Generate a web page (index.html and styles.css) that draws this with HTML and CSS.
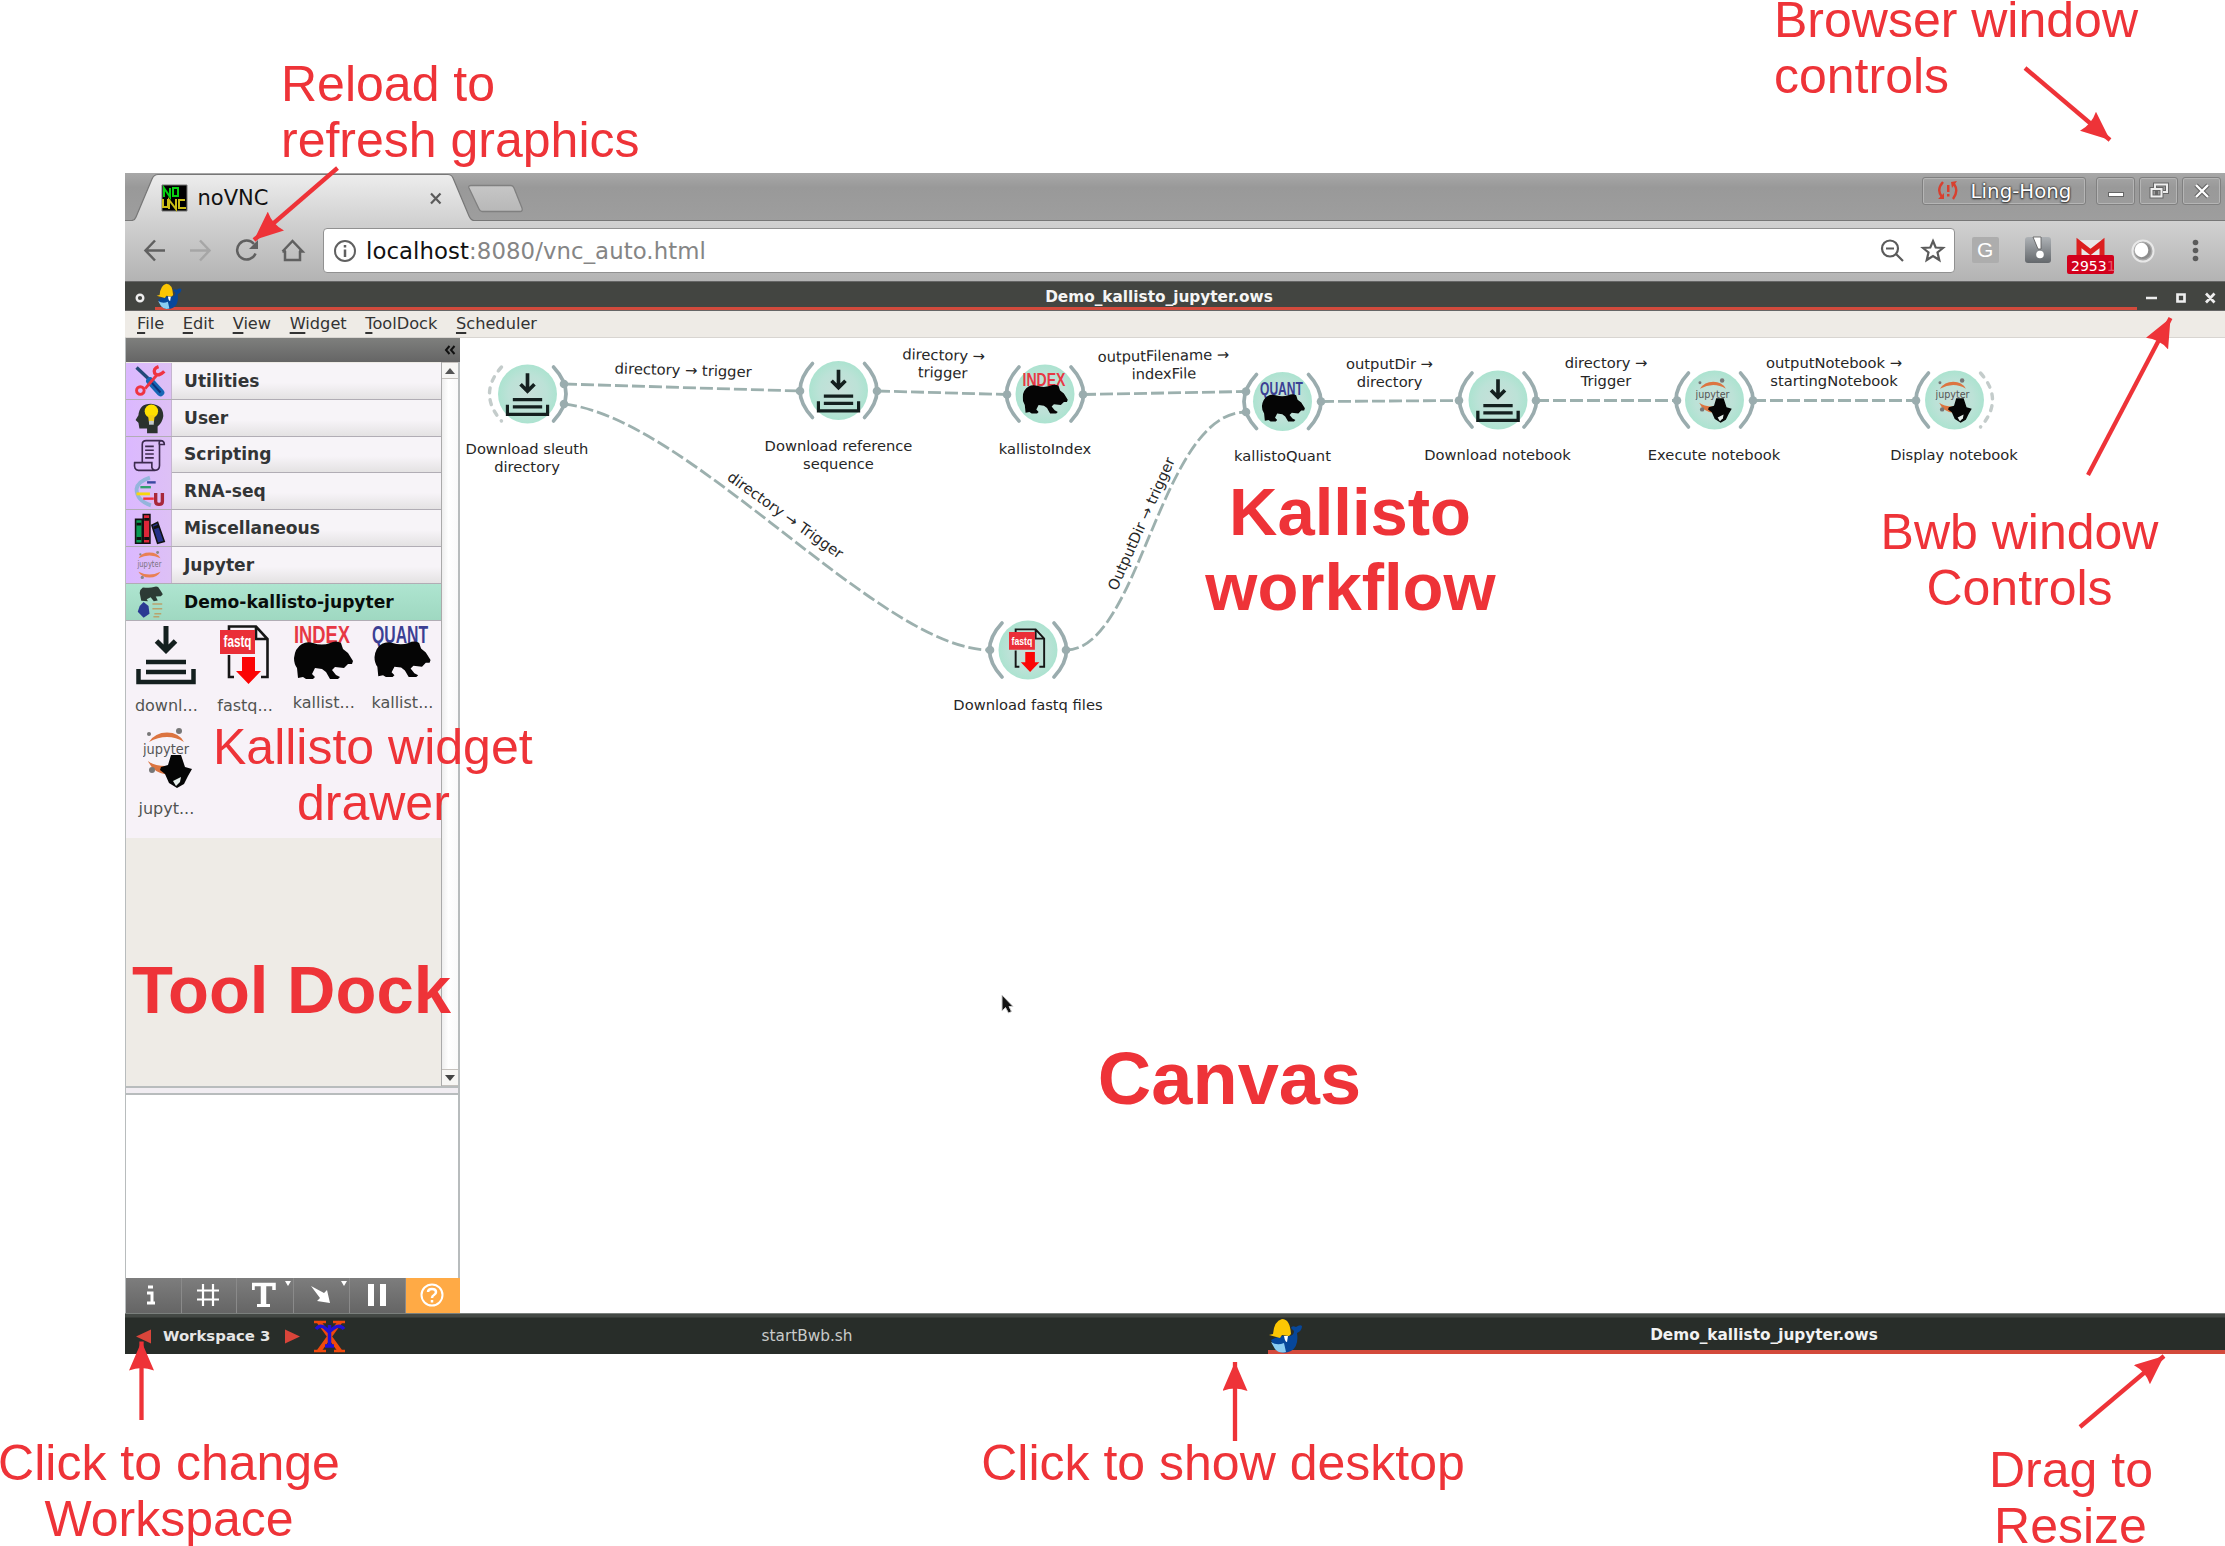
FILE: index.html
```html
<!DOCTYPE html>
<html lang="en">
<head>
<meta charset="utf-8">
<title>noVNC</title>
<link rel="stylesheet" href="styles.css">
</head>
<body>
<svg class="defs" width="0" height="0">
  <defs>
    <radialGradient id="mint"><stop offset="0" stop-color="#c8dfd9"/><stop offset=".65" stop-color="#bce2d7"/><stop offset="1" stop-color="#ace3d0"/></radialGradient>
    <symbol id="download" viewBox="0 0 60 60">
      <path d="M30 1V24M20.500 16L30 25.500L39.500 16" fill="none" stroke="#14201f" stroke-width="5"/>
      <path d="M10 37H50M10 47H50M2.500 44V57H57.500V44" fill="none" stroke="#14201f" stroke-width="4.500"/>
    </symbol>
    <symbol id="bear" viewBox="0 0 60 40">
      <path d="M0 17Q1 7 8 3Q13 0 19 2Q28 5 36 2Q42-1 47 2L49 8L54 12L59 20L58 23L54 23L50 27L41 26L38 29L42 34L46 36L44 38L36 38L32 31L28 28L21 27L18 33L21 36L19 38L12 38L9 36L4 37L3 27Q0 23 0 17Z" fill="#050505"/>
    </symbol>
    <symbol id="index" viewBox="0 0 60 56">
      <text x="0" y="18" class="caps" fill="#e73844" textLength="56" lengthAdjust="spacingAndGlyphs">INDEX</text>
      <use href="#bear" x="0" y="16" width="60" height="40"/>
    </symbol>
    <symbol id="quant" viewBox="0 0 60 56">
      <text x="0" y="18" class="caps" fill="#3b3f94" textLength="56" lengthAdjust="spacingAndGlyphs">QUANT</text>
      <use href="#bear" x="2" y="16" width="58" height="38"/>
    </symbol>
    <symbol id="fastq" viewBox="0 0 50 60">
      <path d="M9 28V1.500H36L47.500 14V52H41M9 30V52H14M36 1.500V14H47.500" fill="none" stroke="#161616" stroke-width="2.600"/>
      <path d="M0 5H35V29H0Z" fill="#ea2f38"/>
      <path d="M22 32H35V46H41L28.500 59L16 46H22Z" fill="#fb0505"/>
      <text x="3.500" y="22" class="fq" textLength="28" lengthAdjust="spacingAndGlyphs">fastq</text>
    </symbol>
    <symbol id="jup" viewBox="0 0 50 60">
      <path d="M6 14Q12 4.500 24 4.500T41 14Q33 9 24 9T6 14Z" fill="#dc7440"/>
      <path d="M5 33Q11 38 23 38L25 47Q10 45 5 33Z" fill="#dc7440"/>
      <circle cx="6" cy="6" r="2" fill="#777"/><circle cx="36" cy="3" r="3" fill="#777"/><circle cx="9" cy="42" r="3" fill="#777"/>
      <text x="0" y="26" class="jt" textLength="46" lengthAdjust="spacingAndGlyphs">jupyter</text>
      <path d="M28 27L38 27L42 39L49 41L45 48L41 56L34 60L26 55L22 46L17 42L18 39L25 37Z" fill="#050505"/>
      <path d="M30 53L38 49L37 54L33 58Z" fill="#e6efec"/>
    </symbol>
    <symbol id="whale" viewBox="0 0 35 36">
      <path d="M3 22Q14 16 22 18Q26 17 26 13L23 10Q24 7 28 9Q32 6 34 8Q34 13 29 15Q31 28 23 33Q15 37 8 32Z" fill="#07479a"/>
      <path d="M3 24Q9 28 16 25L18 34Q11 36 7 31Z" fill="#8bcdf2"/>
      <path d="M16 18L20 18L19 24Q17 24 16 18Z" fill="#fff"/>
      <path d="M5 16Q6 3 14 1Q22 1 23 16L21 18L14 17L12 20L1 17Z" fill="#fcc603"/>
    </symbol>
    <marker id="head" viewBox="0 0 29 25" refX="29" refY="12.500" markerWidth="29" markerHeight="25" markerUnits="userSpaceOnUse" orient="auto"><path d="M29 12.500L0 25Q5 12.500 0 0Z" fill="#ee3338"/></marker>
  </defs>
</svg>

<div class="page">
  <main class="window">
    <header class="tabstrip">
      <svg class="tabshape" width="420" height="48" viewBox="125 173 420 48">
        <defs><linearGradient id="tg" x1="0" y1="0" x2="0" y2="1"><stop offset="0" stop-color="#ededed"/><stop offset="1" stop-color="#d1d1d1"/></linearGradient>
        <linearGradient id="ng" x1="0" y1="0" x2="0" y2="1"><stop offset="0" stop-color="#c6c6c6"/><stop offset="1" stop-color="#b8b8b8"/></linearGradient></defs>
        <path d="M125 220.500H132Q135 220 136 217L152 179Q154 174.500 158 174.500H448Q451.500 174.500 453 178L469 216Q471 220.500 474 220.500H545V222H125Z" fill="url(#tg)"/>
        <path d="M125 220.500H132Q135 220 136 217L152 179Q154 174.500 158 174.500H448Q451.500 174.500 453 178L469 216Q471 220.500 474 220.500H545" fill="none" stroke="#777" stroke-width="1.200"/>
        <path d="M471 185.500H511Q513 185.500 514 188L522 208Q523 211.500 520 211.500H482Q480 211.500 479 209L469 188Q468 185.500 471 185.500Z" fill="url(#ng)" stroke="#808080" stroke-width="1.300"/>
        <path d="M162 185H187V211H162Z" fill="#000" stroke="#777"/>
        <path d="M164 197V188L170 197V188M173 188H178V196H173Z" fill="none" stroke="#08d112" stroke-width="2"/>
        <path d="M163 199V207L168 207V199M169 209V200L176 209V199M185 200H179V208H186" fill="none" stroke="#cbbd16" stroke-width="2"/>
        <path d="M431 193.500L440.500 203.500M440.500 193.500L431 203.500" stroke="#5b5b5b" stroke-width="2.200"/>
        <text x="197.500" y="204.500" class="tabtitle">noVNC</text>
      </svg>
      <div class="wm">
        <div class="wbtn user">
          <svg width="22" height="20" viewBox="0 0 22 20"><path d="M6 1Q-1 9 5 16M16 18Q22 10 17 3" fill="none" stroke="#d8402f" stroke-width="2.400"/><path d="M1 18L7 12V18ZM20 0L14 1L15 7ZM10 4H12.500V11H10ZM10 13H12.500V15.500H10Z" fill="#d8402f"/></svg>
          <span>Ling-Hong</span>
        </div>
        <div class="wbtn"><svg width="36" height="26"><path d="M10 16.500H26" stroke="#666" stroke-width="5"/><path d="M11 16.500H25" stroke="#fff" stroke-width="3"/></svg></div>
        <div class="wbtn"><svg width="36" height="26"><path d="M14 11V6.500H26V14H22M10.500 11H20.500V18.500H10.500ZM14 15H17" fill="none" stroke="#666" stroke-width="4"/><path d="M14 11V6.500H26V14H22M10.500 11H20.500V18.500H10.500Z" fill="none" stroke="#eee" stroke-width="2"/></svg></div>
        <div class="wbtn"><svg width="36" height="26"><path d="M12 7L24 19M24 7L12 19" stroke="#666" stroke-width="4.500"/><path d="M12 7L24 19M24 7L12 19" stroke="#fff" stroke-width="2.300"/></svg></div>
      </div>
    </header>

    <div class="navbar">
      <svg class="navicons" width="198" height="60" viewBox="125 221 198 60" fill="none" stroke="#606060" stroke-width="2.500">
        <path d="M165 250.500H146M155 240.500L145.500 250.500L155 260.500"/>
        <path d="M190 250.500H209M200 240.500L209.500 250.500L200 260.500" stroke="#a6a6a6"/>
        <path d="M254 244A9.500 9.500 0 1 0 255.500 253.500"/><path d="M258 240V249H249Z" fill="#606060" stroke="none"/>
        <path d="M285 251V260H300V251M282.500 251.500L292.500 241L302.500 251.500H299M282.500 251.500H286"/>
      </svg>
      <div class="urlbar">
        <svg width="24" height="24" viewBox="0 0 24 24"><circle cx="12" cy="12" r="10" fill="none" stroke="#606060" stroke-width="2"/><path d="M12 6V8.500M12 10.500V18" stroke="#606060" stroke-width="2.500"/></svg>
        <span class="url"><b>localhost</b>:8080/vnc_auto.html</span>
        <svg class="urlend" width="66" height="26" viewBox="1880 238 66 26" fill="none" stroke="#5b5b5b" stroke-width="2.200"><circle cx="1890" cy="248.500" r="8"/><path d="M1886 248.500H1894M1896 254L1903 261" /><path d="M1933 241L1935.700 247.500L1943 248L1937.500 252.500L1939.300 260L1933 256L1926.700 260L1928.500 252.500L1923 248L1930.300 247.500Z"/></svg>
      </div>
      <svg class="ext" width="270" height="60" viewBox="1955 221 270 60">
        <rect x="1972" y="237" width="27" height="26" rx="2" fill="#adadad"/>
        <text x="1977" y="257" class="g">G</text>
        <defs><linearGradient id="eg" x1="0" y1="0" x2="0" y2="1"><stop offset="0" stop-color="#aeb2b6"/><stop offset="1" stop-color="#64686c"/></linearGradient></defs>
        <rect x="2025" y="237" width="26" height="26" rx="3" fill="url(#eg)"/>
        <path d="M2033 237L2041 237L2041 249L2038 249Z" fill="#fff" stroke="#555" stroke-width=".8"/><circle cx="2040" cy="254.500" r="3.800" fill="#fff"/>
        <path d="M2077 240H2104V256H2077Z" fill="#e8e8e8"/><path d="M2079 256V243L2090.500 252L2102 243V256" fill="none" stroke="#dc1f1f" stroke-width="5"/>
        <rect x="2067" y="255" width="47" height="19" rx="2" fill="#d2001c"/>
        <text x="2071" y="270.500" class="badge">2953<tspan fill="#e45567">1</tspan></text>
        <circle cx="2143" cy="251" r="10.500" fill="#a8a8a8" stroke="#e8e8e8" stroke-width="2"/><circle cx="2143" cy="251" r="8" fill="#8c8c8c"/><ellipse cx="2141.500" cy="250" rx="6.800" ry="7.200" fill="#fff"/>
        <g fill="#5b5b5b"><circle cx="2195.500" cy="242.500" r="2.800"/><circle cx="2195.500" cy="250.500" r="2.800"/><circle cx="2195.500" cy="258.500" r="2.800"/></g>
      </svg>
    </div>

    <div class="titlebar">
      <svg width="30" height="29" viewBox="125 281 30 29"><circle cx="140" cy="297" r="3.300" fill="none" stroke="#eee" stroke-width="2.400"/></svg>
      <div class="titletab">
        <svg width="28" height="28"><use href="#whale" y="1" width="28" height="27"/></svg>
        <span>Demo_kallisto_jupyter.ows</span>
      </div>
      <svg width="88" height="29" viewBox="2137 281 88 29" fill="none" stroke="#eee" stroke-width="2.700"><path d="M2146 297H2157M2177.500 293.500H2184.500V300.500H2177.500ZM2206 292.500L2214.500 301.500M2214.500 292.500L2206 301.500"/></svg>
    </div>

    <nav class="menubar"><span><u>F</u>ile</span><span><u>E</u>dit</span><span><u>V</u>iew</span><span><u>W</u>idget</span><span><u>T</u>oolDock</span><span><u>S</u>cheduler</span></nav>

    <div class="work">
      <aside class="dock">
        <div class="dockhead"><svg width="12" height="10" viewBox="0 0 12 10"><path d="M5.500 1L2 5L5.500 9M10.500 1L7 5L10.500 9" fill="none" stroke="#111" stroke-width="2"/></svg></div>
        <div class="dockbody">
          <div class="docklist">
            <div class="cat"><svg viewBox="0 0 47 36"><path d="M11 4L26 18" stroke="#234a78" stroke-width="3.500"/><path d="M25 18L36 30" stroke="#1767b5" stroke-width="8" stroke-linecap="round"/><path d="M27 20L36 30" stroke="#102f78" stroke-width="2"/><path d="M20 26L32 12" stroke="#ef3341" stroke-width="3"/><circle cx="15" cy="28" r="4" fill="none" stroke="#ef3341" stroke-width="3"/><path d="M34 3Q28 5 30 10Q34 14 40 8" fill="none" stroke="#ef3341" stroke-width="3.500"/></svg><span>Utilities</span></div>
            <div class="cat"><svg viewBox="0 0 47 36"><path d="M22 34L22 29L14 29L13 23L10 20L13 15Q14 3 26 3Q39 4 39 16Q38 23 33 27L33 34Z" fill="#2b322e"/><circle cx="26.500" cy="11" r="7" fill="#ffe000"/><path d="M23 15H30L29 23H24Z" fill="#f4cf15"/><path d="M24 21H29V25H24Z" fill="#c2c8cc"/></svg><span>User</span></div>
            <div class="cat"><svg viewBox="0 0 47 36"><path d="M17 26V7Q17 3 21 3H36Q40 3 40 7H35V29Q35 34 30 34H13Q8 34 9 26H27V31Q28 34 31 34M36 3Q34 4 35 8M20 9H29M20 13H29M20 17H29M20 21H29" fill="none" stroke="#3c2a4e" stroke-width="1.700"/></svg><span>Scripting</span></div>
            <div class="cat"><svg viewBox="0 0 47 36" fill="none"><path d="M25 4Q12 8 11 16Q11 28 26 33" stroke="#94b5dc" stroke-width="4"/><path d="M22 9H31" stroke="#3947a0" stroke-width="2.500"/><path d="M15 14H26" stroke="#33a06c" stroke-width="2.500"/><path d="M11 21H25" stroke="#f7d70c" stroke-width="3"/><path d="M18 26H29" stroke="#f0323e" stroke-width="2.500"/><path d="M31 20V29Q31 32 34.500 32T38 29V20" stroke="#a8283a" stroke-width="3.500"/></svg><span>RNA-seq</span></div>
            <div class="cat"><svg viewBox="0 0 47 36" stroke="#111" stroke-width="1.600"><path d="M10 9H17V34H10Z" fill="#0a9a55"/><path d="M18 4H25V34H18Z" fill="#dd2638"/><path d="M27 15L33 12L40 32L33 34Z" fill="#243187"/><path d="M11 14H16M19 9H24M11 29H16M19 29H24M29 18L34 16" stroke-width="3"/></svg><span>Miscellaneous</span></div>
            <div class="cat"><svg viewBox="0 0 47 36"><path d="M13 11Q16 5 24.500 5T36 11Q30 8 24.500 8T13 11ZM13 25Q16 31 24.500 31T36 25Q30 28 24.500 28T13 25Z" fill="#e98053"/><text x="12" y="20" class="jtiny" textLength="25" lengthAdjust="spacingAndGlyphs">jupyter</text><circle cx="15" cy="7" r="1.200" fill="#888"/><circle cx="33" cy="5" r="1.500" fill="#888"/><circle cx="17" cy="31" r="1.700" fill="#888"/></svg><span>Jupyter</span></div>
            <div class="cat active"><svg viewBox="0 0 47 36"><g transform="translate(14 2) scale(.4)" opacity=".85"><path d="M0 17Q1 7 8 3Q28 5 36 2Q42-1 47 2L54 12L59 20L54 25L41 26L46 36L36 38L28 28L18 33L21 38L4 37Z" fill="#161d1a"/></g><path d="M14 22L18 18L23 22L24 30L18 34L12 28Z" fill="#2b3a92"/><path d="M27 20H37M27 25H37M29 30H36M28 33H34" stroke="#b9a36d" stroke-width="1.500"/></svg><span>Demo-kallisto-jupyter</span></div>
            <div class="drawer">
              <div class="tool"><svg width="60" height="60"><use href="#download" width="60" height="60"/></svg><span>downl...</span></div>
              <div class="tool"><svg width="50" height="60"><use href="#fastq" width="50" height="60"/></svg><span>fastq...</span></div>
              <div class="tool up"><svg width="60" height="56"><use href="#index" width="60" height="56"/></svg><span>kallist...</span></div>
              <div class="tool up"><svg width="60" height="56"><use href="#quant" width="60" height="56"/></svg><span>kallist...</span></div>
              <div class="tool"><svg width="50" height="60"><use href="#jup" width="50" height="60"/></svg><span>jupyt...</span></div>
            </div>
          </div>
          <div class="scroll"><i class="sb"><svg width="10" height="6"><path d="M0 6L5 0L10 6Z" fill="#555"/></svg></i><i class="sb"><svg width="10" height="6"><path d="M0 0L5 6L10 0Z" fill="#444"/></svg></i></div>
        </div>
        <div class="splitter"></div>
        <div class="info"></div>
        <div class="tools">
          <div><svg width="12" height="20" viewBox="0 0 12 20"><path d="M1 2H6M0 8H5V17M0 18H8" fill="none" stroke="#fff" stroke-width="3"/></svg></div>
          <div><svg width="24" height="24" viewBox="0 0 24 24"><path d="M1 7.500H23M1 16.500H23M7 1V23M17 1V23" stroke="#fff" stroke-width="2.200"/></svg></div>
          <div><svg width="24" height="26" viewBox="0 0 24 26"><path d="M1 8V2.500H22V8" fill="none" stroke="#fff" stroke-width="3.500"/><path d="M11.500 2V24" stroke="#fff" stroke-width="5.500"/><path d="M5 23.500H18" stroke="#fff" stroke-width="3"/></svg><svg class="more" width="6" height="5"><path d="M0 0H6L3 5Z" fill="#fff"/></svg></div>
          <div><svg width="20" height="18" viewBox="0 0 20 18"><path d="M0 0L13 7L16 4L19 17L6 15L9 12Z" fill="#fff"/></svg><svg class="more" width="6" height="5"><path d="M0 0H6L3 5Z" fill="#fff"/></svg></div>
          <div><svg width="18" height="22"><path d="M0 0H6V22H0ZM12 0H18V22H12Z" fill="#fff"/></svg></div>
          <div class="help"><svg width="24" height="24" viewBox="0 0 24 24" fill="none" stroke="#fff" stroke-width="2"><circle cx="12" cy="12" r="10.500"/><path d="M8 9Q8 6 12 6T16 9Q16 11 14 12T12 15M12 17V19.500" stroke-width="2.500"/></svg></div>
        </div>
      </aside>

      <svg class="canvas" width="1765" height="975" viewBox="460 338 1765 975">
        <g class="links">
          <path d="M564 384L800 391"/>
          <path d="M877 391L1007 394.500"/>
          <path d="M1083 394.500L1246 391.500"/>
          <path d="M1321 401.500L1459 400.500"/>
          <path d="M1536 400.500H1677"/>
          <path d="M1753 400.500H1916"/>
          <path d="M564 404C690 418 880 650 990 650"/>
          <path d="M1066 650C1140 650 1160 412 1246 412"/>
        </g>
        <g class="ports">
          <circle cx="564" cy="384" r="4.300"/><circle cx="564" cy="404" r="4.300"/><circle cx="800" cy="391" r="4.300"/><circle cx="877" cy="391" r="4.300"/><circle cx="1007" cy="394.500" r="4.300"/><circle cx="1083" cy="394.500" r="4.300"/><circle cx="1246" cy="391.500" r="4.300"/><circle cx="1246" cy="412" r="4.300"/><circle cx="1321" cy="401.500" r="4.300"/><circle cx="1459" cy="400.500" r="4.300"/><circle cx="1536" cy="400.500" r="4.300"/><circle cx="1677" cy="400.500" r="4.300"/><circle cx="1753" cy="400.500" r="4.300"/><circle cx="1916" cy="400.500" r="4.300"/><circle cx="990" cy="650" r="4.300"/><circle cx="1066" cy="650" r="4.300"/>
        </g>
        <g class="node" transform="translate(527.500 394)"><path class="open" d="M-26-27Q-50 0-26 27"/><path class="arc" d="M26-27Q51 0 26 27"/><circle r="29.500"/><use href="#download" x="-22" y="-22" width="44" height="45"/></g>
        <g class="node" transform="translate(838.500 390.500)"><path class="arc" d="M-26-27Q-51 0-26 27M26-27Q51 0 26 27"/><circle r="29.500"/><use href="#download" x="-22" y="-22" width="44" height="45"/></g>
        <g class="node" transform="translate(1045 394)"><path class="arc" d="M-26-27Q-51 0-26 27M26-27Q51 0 26 27"/><circle r="29.500"/><use href="#index" x="-22.500" y="-22" width="46" height="43"/></g>
        <g class="node" transform="translate(1282.500 401.500)"><path class="arc" d="M-26-27Q-51 0-26 27M26-27Q51 0 26 27"/><circle r="29.500"/><use href="#quant" x="-22.500" y="-20" width="46" height="43"/></g>
        <g class="node" transform="translate(1498 400)"><path class="arc" d="M-26-27Q-51 0-26 27M26-27Q51 0 26 27"/><circle r="29.500"/><use href="#download" x="-22" y="-22" width="44" height="45"/></g>
        <g class="node" transform="translate(1714.500 400)"><path class="arc" d="M-26-27Q-51 0-26 27M26-27Q51 0 26 27"/><circle r="29.500"/><use href="#jup" x="-19" y="-22" width="37" height="45"/></g>
        <g class="node" transform="translate(1954.500 400)"><path class="arc" d="M-26-27Q-51 0-26 27"/><path class="open" d="M26-27Q50 0 26 27"/><circle r="29.500"/><use href="#jup" x="-19" y="-22" width="37" height="45"/></g>
        <g class="node" transform="translate(1028 650)"><path class="arc" d="M-26-27Q-51 0-26 27M26-27Q51 0 26 27"/><circle r="29.500"/><use href="#fastq" x="-19" y="-22" width="37" height="45"/></g>
        <g class="labels" transform="translate(0 -.7)">
          <text x="527" y="455">Download sleuth</text><text x="527" y="473">directory</text>
          <text x="838.500" y="451.500">Download reference</text><text x="838.500" y="470">sequence</text>
          <text x="1045" y="454.500">kallistoIndex</text>
          <text x="1282.500" y="462">kallistoQuant</text>
          <text x="1497.500" y="461">Download notebook</text>
          <text x="1714" y="461">Execute notebook</text>
          <text x="1954" y="461">Display notebook</text>
          <text x="1028" y="710.500">Download fastq files</text>
          <text transform="translate(683 376) rotate(1.500)">directory → trigger</text>
          <text transform="translate(943.500 361) rotate(1.500)">directory →</text><text transform="translate(942.500 378.500) rotate(1.500)">trigger</text>
          <text transform="translate(1163.500 361.500) rotate(-1)">outputFilename →</text><text transform="translate(1164 379.500) rotate(-1)">indexFile</text>
          <text x="1389.500" y="370">outputDir →</text><text x="1389.500" y="388">directory</text>
          <text x="1606" y="369">directory →</text><text x="1606" y="387">Trigger</text>
          <text x="1834" y="369">outputNotebook →</text><text x="1834" y="387">startingNotebook</text>
          <text transform="translate(782.500 520) rotate(35.500)">directory → Trigger</text>
          <text transform="translate(1146 526.500) rotate(-66)">OutputDir → trigger</text>
        </g>
        <path d="M1002 995V1011L1005.500 1007.500L1008.500 1013L1011.500 1011.500L1009 1006.500H1013Z" fill="#111" stroke="#ccc" stroke-width="1"/>
      </svg>
    </div>

    <footer class="taskbar">
      <svg width="38" height="38" viewBox="125 1316 38 38"><path d="M136 1336.500L151 1329.500V1343.500Z" fill="#d9453a"/></svg>
      <b class="ws">Workspace 3</b>
      <svg width="75" height="38" viewBox="271 1316 75 38"><path d="M300 1336.500L285 1329.500V1343.500Z" fill="#d9453a"/><path d="M319 1322L340 1351M340 1322L319 1351" stroke="#f0480c" stroke-width="4.500"/><path d="M314 1322H326M333 1322H345M314 1351H326M334 1351H345" stroke="#f0480c" stroke-width="2.500"/><path d="M329.500 1325V1347M316 1329Q320 1324 325 1328L329 1332L334 1328Q340 1324 344 1329M325 1346H334" fill="none" stroke="#2110d4" stroke-width="3.500"/></svg>
      <span class="task">startBwb.sh</span>
      <div class="task current"><svg width="35" height="36"><use href="#whale" width="35" height="36"/></svg><b>Demo_kallisto_jupyter.ows</b></div>
    </footer>
  </main>

  <svg class="notes" width="2225" height="1546" viewBox="0 0 2225 1546">
    <g class="n">
      <text x="281" y="101">Reload to</text><text x="281" y="157">refresh graphics</text>
      <text x="1774" y="36.500">Browser window</text><text x="1774" y="92.500">controls</text>
      <text x="213" y="763.500">Kallisto widget</text><text x="297" y="819.500">drawer</text>
      <g text-anchor="middle">
        <text x="2019.500" y="549">Bwb window</text><text x="2019.500" y="605">Controls</text>
        <text x="169" y="1480">Click to change</text><text x="169" y="1536">Workspace</text>
        <text x="1223" y="1480">Click to show desktop</text>
        <text x="2071" y="1486.500">Drag to</text><text x="2070.500" y="1542.500">Resize</text>
      </g>
    </g>
    <g class="n strong" text-anchor="middle">
      <text x="1350" y="534.500">Kallisto</text><text x="1350.500" y="610">workflow</text>
      <text x="291.500" y="1013">Tool Dock</text>
      <text x="1229.500" y="1104" class="big">Canvas</text>
    </g>
    <g class="arrows">
      <path d="M337.500 168L254 240"/><path d="M141.500 1420V1341.500"/><path d="M1235 1441V1362"/><path d="M2080 1427L2164 1356"/><path d="M2088 475L2170.500 318"/><path d="M2025 68L2110 140"/>
    </g>
  </svg>
</div>
</body>
</html>
```
FILE: styles.css
```css
* { box-sizing: border-box; }
body { margin: 0; background: #fff; font-family: "DejaVu Sans", sans-serif; }
svg { display: block; flex: none; }
.defs { position: absolute; }
.page { position: relative; width: 2225px; height: 1546px; padding: 173px 0 0 125px; overflow: hidden; }
.window { width: 2100px; display: flex; flex-direction: column; }

.tabstrip { height: 48px; display: flex; justify-content: space-between; background: linear-gradient(#a8a8a8, #999 30%, #9e9e9e); box-shadow: inset 0 -1px #777; }
.tabtitle { font-size: 21px; fill: #111; }
.wm { display: flex; gap: 4px; padding: 4px 4px 0 0; }
.wbtn { width: 39px; height: 28px; border: 1px solid #808080; border-radius: 3px; box-shadow: inset 0 0 0 1px #b5b5b5; display: flex; align-items: center; justify-content: center; }
.user { width: 164px; margin-right: 6px; gap: 12px; font-size: 19.8px; color: #fff; text-shadow: 0 0 2px #333, 0 0 2px #333, 0 1px 2px #333; }

.navbar { height: 60px; display: flex; align-items: flex-start; background: linear-gradient(#d1d1d1, #b3b3b3); }
.urlbar { width: 1632px; height: 45px; margin-top: 7px; background: #fff; border: 1.5px solid #919191; border-radius: 4px; padding: 0 8px 0 9px; display: flex; align-items: center; }
.url { font-size: 22.8px; letter-spacing: .08px; color: #858585; margin-left: 9px; flex: 1; white-space: nowrap; line-height: 40px; }
.url b { font-weight: 400; color: #111; }
.g { font: 21px "Liberation Sans", sans-serif; fill: #fff; }
.badge { font-size: 14px; fill: #fff; }

.titlebar { height: 30px; display: flex; background: #434541; color: #f5f5f5; border-top: 1px solid #666; border-bottom: 1px solid #666; }
.titletab { width: 1982px; display: flex; border-bottom: 3px solid #d34a3c; font-size: 15.3px; font-weight: 700; }
.titletab svg { margin-bottom: -3px; }
.titletab span { flex: 1; text-align: center; line-height: 31px; height: 25px; margin-right: 2px; }

.menubar { height: 27px; display: flex; gap: 18.600px; padding: 0 0 0 12px; background: #eeebe6; border-bottom: 1px solid #d8d5d1; font-size: 16.200px; line-height: 25px; color: #333; }
.menubar u { text-underline-offset: 3px; text-decoration-thickness: 1.500px; }

.work { display: flex; height: 975px; }
.dock { width: 335px; display: flex; flex-direction: column; border-right: 2px solid #b8bcbd; border-left: 1px solid #b8bcbd; }
.dockhead { height: 24px; background: linear-gradient(#7e7f7d, #656565); display: flex; justify-content: flex-end; align-items: center; padding-right: 4px; margin-right: -2px; }
.dockbody { height: 724px; display: flex; background: #eeebe6; }
.docklist { width: 316px; border-right: 1px solid #aaa; padding-top: 1px; }
.cat { height: 36.800px; display: flex; align-items: center; border-bottom: 1px solid #b1adb5; background: linear-gradient(#f7f4f8 55%, #e4e2e3); color: #333536; font-size: 17.100px; font-weight: 700; }
.cat svg { width: 46px; height: 36px; background: linear-gradient(90deg, #dbb8ff, #ddc0f5); border-right: 1px solid #c5b5d0; }
.cat span { margin-left: 12px; }
.cat.active { background: linear-gradient(#aee5d0, #9fd8c1); color: #080d0b; }
.cat.active svg { background: none; border: 0; }
.jtiny { font: 9px "DejaVu Sans", sans-serif; fill: #77717d; }
.drawer { height: 217px; background: #f7f2f8; display: grid; grid-template-columns: repeat(4, 78.700px); grid-auto-rows: 103px; padding: 4px 0 0 1px; }
.tool { display: flex; flex-direction: column; align-items: center; gap: 11px; font-size: 16px; color: #515451; line-height: 20px; }
.tool.up { gap: 12px; }
.tool:last-child svg { margin-left: 3px; }
.caps { font: bold 24px "Liberation Sans", sans-serif; }
.fq { font: bold 16px "Liberation Sans", sans-serif; fill: #fff; }
.jt { font: 14px "DejaVu Sans", sans-serif; fill: #555; }
.scroll { flex: 1; background: linear-gradient(90deg, #eee, #fff 40%, #fafafa); display: flex; flex-direction: column; justify-content: space-between; }
.sb { height: 17px; display: flex; align-items: center; justify-content: center; background: #f7f6f4; border: 1px solid #c5c1bd; border-width: 1px 0; }
.splitter { height: 9px; background: #f1edf2; border: 2px solid #b8bcbd; border-width: 2px 0; }
.info { flex: 1; background: #fff; }
.tools { height: 35px; display: grid; grid-template-columns: 56px 55px 57px 56px 56px 54px; margin-right: -2px; background: linear-gradient(#7d7d7d, #656565); }
.tools div { position: relative; display: flex; align-items: center; justify-content: center; padding: 0 2px 2px 0; border-right: 1px solid #8a8a8a; }
.tools .more { position: absolute; right: 2px; top: 3px; }
.tools .help { background: #ffaa45; border: 0; }

.canvas { background: #fff; }
.links { fill: none; stroke: #9cb0ae; stroke-width: 2.800; stroke-dasharray: 13 4; }
.ports { fill: #9aadae; }
.arc { fill: none; stroke: #9aacae; stroke-width: 3.600; stroke-linecap: round; }
.open { fill: none; stroke: #c4cccb; stroke-dasharray: 5 7; stroke-width: 3.400; stroke-linecap: round; }
.node circle { fill: url(#mint); }
.node use circle { fill: #777; }
.labels text { font-size: 14.7px; fill: #262626; text-anchor: middle; }

.taskbar { height: 41px; display: flex; align-items: flex-end; background: linear-gradient(#444945 3px, #282d29 4px); border-top: 1px solid #7b807d; color: #e6e6e6; font-size: 15.300px; line-height: 34px; }
.ws { width: 108px; font-size: 14.900px; line-height: 36px; white-space: nowrap; }
.task { width: 922px; text-align: center; color: #c9cbca; line-height: 36px; }
.current { flex: 1; display: flex; border-bottom: 4px solid #d34a3c; color: #f2f2f2; height: 36px; line-height: 34px; }
.current svg { margin-bottom: -4px; }
.current b { flex: 1; }

.notes { position: absolute; left: 0; top: 0; pointer-events: none; }
.n { font: 50px "Liberation Sans", sans-serif; fill: #ee3338; }
.strong { font-weight: 700; font-size: 67px; }
.big { font-size: 74px; }
.arrows path { fill: none; stroke: #ee3338; stroke-width: 4.300; marker-end: url(#head); }
```
